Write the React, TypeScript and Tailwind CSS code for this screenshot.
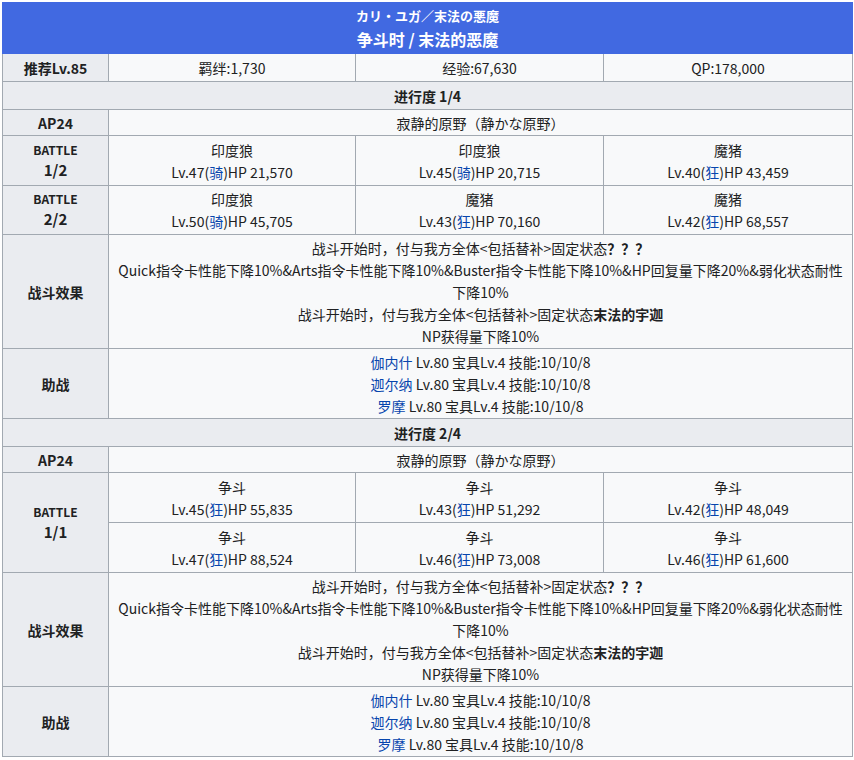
import React from "react";

const L = "border border-[#a2a9b1] bg-[#eaecf0] font-bold text-center px-1";
const C = "border border-[#a2a9b1] bg-[#f8f9fa] text-center px-1";
const A = "text-[#0645ad]";

function Enemy({ n, lv, cls, hp }: { n: string; lv: string; cls: string; hp: string }) {
  return (
    <td className={C}>
      <div>{n}</div>
      <div>Lv.{lv}(<span className={A}>{cls}</span>)HP {hp}</div>
    </td>
  );
}

function Effect() {
  return (
    <tr className="h-[114px]">
      <td className={L}>战斗效果</td>
      <td className={C} colSpan={3}>
        <div>战斗开始时，付与我方全体&lt;包括替补&gt;固定状态<b>？？？</b></div>
        <div>Quick指令卡性能下降10%&amp;Arts指令卡性能下降10%&amp;Buster指令卡性能下降10%&amp;HP回复量下降20%&amp;弱化状态耐性下降10%</div>
        <div>战斗开始时，付与我方全体&lt;包括替补&gt;固定状态<b>末法的宇迦</b></div>
        <div>NP获得量下降10%</div>
      </td>
    </tr>
  );
}

function Support() {
  return (
    <tr className="h-[70px]">
      <td className={L}>助战</td>
      <td className={C} colSpan={3}>
        <div><span className={A}>伽内什</span> Lv.80 宝具Lv.4 技能:10/10/8</div>
        <div><span className={A}>迦尔纳</span> Lv.80 宝具Lv.4 技能:10/10/8</div>
        <div><span className={A}>罗摩</span> Lv.80 宝具Lv.4 技能:10/10/8</div>
      </td>
    </tr>
  );
}

function Battle({ a, b }: { a: string; b: string }) {
  return (
    <td className={L}>
      <div className="text-[12px] leading-[18px]">{a}</div>
      <div className="text-[15px]">{b}</div>
    </td>
  );
}

export default function App() {
  return (
    <div className="p-[2px] bg-white text-[#202122] text-[14px] leading-[22px]" style={{ fontFamily: '"Noto Sans CJK SC", "Noto Sans", sans-serif' }}>
      <table className="w-[850px] border-collapse table-fixed">
        <colgroup>
          <col className="w-[106px]" />
          <col className="w-[247px]" />
          <col className="w-[248px]" />
          <col className="w-[249px]" />
        </colgroup>
        <tbody>
          <tr className="h-[51px]">
            <td colSpan={4} className="bg-[#4169e1] text-white text-center font-bold border border-[#4169e1]">
              <div className="text-[13px] leading-[22px]">カリ・ユガ／末法の悪魔</div>
              <div className="text-[16px] leading-[24px]">争斗时 / 末法的恶魔</div>
            </td>
          </tr>
          <tr className="h-[28px]">
            <td className={L}>推荐Lv.85</td>
            <td className={C}>羁绊:1,730</td>
            <td className={C}>经验:67,630</td>
            <td className={C}>QP:178,000</td>
          </tr>
          <tr className="h-[28px]"><td colSpan={4} className={L}>进行度 1/4</td></tr>
          <tr className="h-[26px]"><td className={L}>AP24</td><td colSpan={3} className={C}>寂静的原野（静かな原野）</td></tr>
          <tr className="h-[50px]">
            <Battle a="BATTLE" b="1/2" />
            <Enemy n="印度狼" lv="47" cls="骑" hp="21,570" />
            <Enemy n="印度狼" lv="45" cls="骑" hp="20,715" />
            <Enemy n="魔猪" lv="40" cls="狂" hp="43,459" />
          </tr>
          <tr className="h-[49px]">
            <Battle a="BATTLE" b="2/2" />
            <Enemy n="印度狼" lv="50" cls="骑" hp="45,705" />
            <Enemy n="魔猪" lv="43" cls="狂" hp="70,160" />
            <Enemy n="魔猪" lv="42" cls="狂" hp="68,557" />
          </tr>
          <Effect />
          <Support />
          <tr className="h-[28px]"><td colSpan={4} className={L}>进行度 2/4</td></tr>
          <tr className="h-[26px]"><td className={L}>AP24</td><td colSpan={3} className={C}>寂静的原野（静かな原野）</td></tr>
          <tr className="h-[50px]">
            <td className={L} rowSpan={2}>
              <div className="text-[12px] leading-[18px]">BATTLE</div>
              <div className="text-[15px]">1/1</div>
            </td>
            <Enemy n="争斗" lv="45" cls="狂" hp="55,835" />
            <Enemy n="争斗" lv="43" cls="狂" hp="51,292" />
            <Enemy n="争斗" lv="42" cls="狂" hp="48,049" />
          </tr>
          <tr className="h-[50px]">
            <Enemy n="争斗" lv="47" cls="狂" hp="88,524" />
            <Enemy n="争斗" lv="46" cls="狂" hp="73,008" />
            <Enemy n="争斗" lv="46" cls="狂" hp="61,600" />
          </tr>
          <Effect />
          <Support />
        </tbody>
      </table>
    </div>
  );
}
